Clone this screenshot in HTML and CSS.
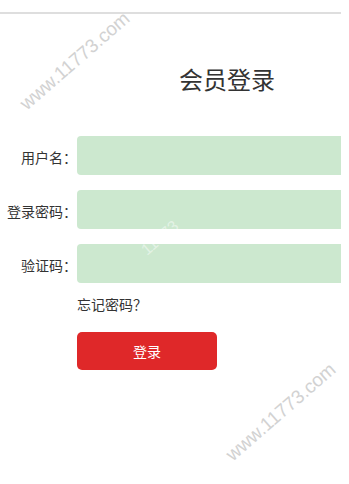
FILE: index.html
```html
<!DOCTYPE html>
<html lang="zh-CN">
<head>
<meta charset="utf-8">
<title>会员登录</title>
<link rel="stylesheet" href="styles.css">
</head>
<body>
<div class="page">
  <div class="topline"></div>
  <h1 class="title">会员登录</h1>
  <form class="form">
    <div class="fields">
      <div class="row"><label class="label">用户名：</label><div class="field"></div></div>
      <div class="row"><label class="label">登录密码：</label><div class="field"></div></div>
      <div class="row"><label class="label">验证码：</label><div class="field"></div></div>
    </div>
    <div class="forgot">忘记密码？</div>
    <button type="button" class="btn">登录</button>
  </form>
  <div class="wm wm1">www.11773.com</div>
  <div class="wm wm2">www.11773.com</div>
  <div class="wm wm3">11773</div>
</div>
</body>
</html>
```
FILE: styles.css
```css
html, body {
  margin: 0;
  padding: 0;
  background: #fff;
}
.page {
  position: relative;
  width: 341px;
  height: 484px;
  overflow: hidden;
  font-family: "Noto Sans CJK SC", "Noto Sans", sans-serif;
  color: #333;
}
.topline {
  margin-top: 12px;
  height: 2px;
  background: #dedede;
}
.title {
  margin: 50px 0 0 0;
  padding-left: 179px;
  font-size: 24px;
  font-weight: normal;
  line-height: 30px;
  color: #333;
}
.form {
  margin: 42px 0 0 0;
  display: flex;
  flex-direction: column;
}
.fields {
  display: flex;
  flex-direction: column;
  gap: 15px;
}
.row {
  display: flex;
  align-items: center;
  height: 39px;
}
.label {
  width: 77px;
  flex: none;
  text-align: right;
  font-size: 14px;
  line-height: 20px;
  color: #333;
  padding-top: 2px;
}
.field {
  flex: 1;
  height: 39px;
  background: #cce8cf;
  border-radius: 4px 0 0 4px;
}
.forgot {
  margin: 11px 0 0 77px;
  font-size: 14px;
  line-height: 20px;
  color: #333;
}
.btn {
  margin: 18px 0 0 77px;
  width: 140px;
  height: 38px;
  border: none;
  border-radius: 5px;
  background: #df2829;
  color: #fff;
  font-family: "Noto Sans CJK SC", "Noto Sans", sans-serif;
  font-size: 14px;
  padding: 0;
}
.wm {
  position: absolute;
  font-family: "Liberation Sans", Arial, sans-serif;
  font-size: 19px;
  color: #d2d2d2;
  white-space: nowrap;
  transform: translate(-50%, -50%) rotate(-41deg);
  pointer-events: none;
}
.wm1 {
  left: 75px;
  top: 61px;
}
.wm2 {
  left: 281px;
  top: 412px;
}
.wm3 {
  left: 160px;
  top: 238px;
  font-size: 16px;
  color: rgba(255, 255, 255, 0.45);
}
```
